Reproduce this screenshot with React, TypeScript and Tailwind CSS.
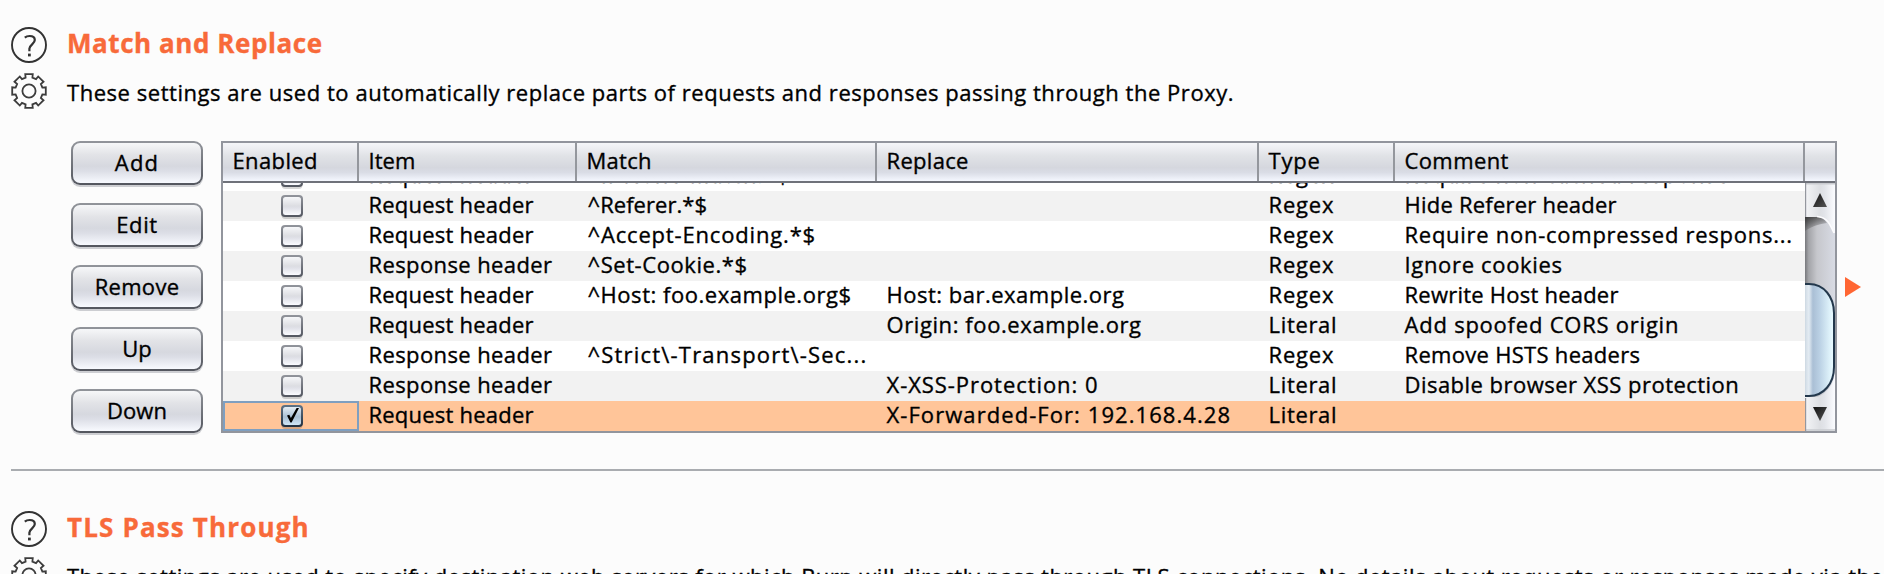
import type { ReactNode } from "react";

type Txt = { t: string; ls: string };
const x = (t: string, ls: string): Txt => ({ t, ls });
const none = x("", "");

const request = x("Request header", "tracking-[0.22px]");
const response = x("Response header", "tracking-[0.39px]");
const regex = x("Regex", "tracking-[0.8px]");
const literal = x("Literal", "tracking-[0.68px]");

const headers: Txt[] = [
  x("Enabled", "tracking-[0.37px]"),
  x("Item", "tracking-[0.05px]"),
  x("Match", "tracking-[0.28px]"),
  x("Replace", "tracking-[0.3px]"),
  x("Type", "tracking-[0.8px]"),
  x("Comment", "tracking-[0.39px]"),
];

const rows: Txt[][] = [
  [request, x("^If-None-Match.*$", "tracking-[0.7px]"), none, regex, x("Require non-cached response", "tracking-[0.7px]")],
  [request, x("^Referer.*$", "tracking-[0.05px]"), none, regex, x("Hide Referer header", "tracking-[0.23px]")],
  [request, x("^Accept-Encoding.*$", "tracking-[0.83px]"), none, regex, x("Require non-compressed respons...", "tracking-[0.73px]")],
  [response, x("^Set-Cookie.*$", "tracking-[0.57px]"), none, regex, x("Ignore cookies", "tracking-[0.67px]")],
  [request, x("^Host: foo.example.org$", "tracking-[0.53px]"), x("Host: bar.example.org", "tracking-[0.5px]"), regex, x("Rewrite Host header", "tracking-[0.23px]")],
  [request, none, x("Origin: foo.example.org", "tracking-[0.59px]"), literal, x("Add spoofed CORS origin", "tracking-[0.77px]")],
  [response, x("^Strict\\-Transport\\-Sec...", "tracking-[1.2px]"), none, regex, x("Remove HSTS headers", "tracking-[0.3px]")],
  [response, none, x("X-XSS-Protection: 0", "tracking-[0.94px]"), literal, x("Disable browser XSS protection", "tracking-[0.47px]")],
  [request, none, x("X-Forwarded-For: 192.168.4.28", "tracking-[1.07px]"), literal, none],
];

const buttons: Txt[] = [
  x("Add", "tracking-[1.2px]"),
  x("Edit", "tracking-[0.59px]"),
  x("Remove", "tracking-[0.3px]"),
  x("Up", "tracking-normal"),
  x("Down", "tracking-[0.08px]"),
];

const columns = "grid grid-cols-[136px_218px_300px_382px_136px_410px]";

function HelpIcon() {
  return (
    <svg width="36" height="36" viewBox="0 0 36 36" fill="none" stroke="#333" className="block shrink-0">
      <circle cx="18" cy="18" r="17" strokeWidth="1.9" />
      <path d="M13.8 10.6C15.2 9.4 17 9 18.6 9C21.8 9 23.8 10.6 23.8 13C23.8 16.8 18.6 17.8 18.4 21.6V24.3" strokeWidth="2.2" />
      <path d="M17 28H19.8" strokeWidth="2.8" />
    </svg>
  );
}

function gearPath() {
  const teeth = 8;
  const pts: string[] = [];
  for (let i = 0; i < teeth; i++) {
    const a = (i * 2 * Math.PI) / teeth;
    const add = (r: number, d: number) =>
      pts.push(`${(18 + r * Math.sin(a + d)).toFixed(2)} ${(18 - r * Math.cos(a + d)).toFixed(2)}`);
    add(13.8, -0.25);
    add(17.2, -0.22);
    add(17.2, 0.22);
    add(13.8, 0.25);
  }
  return `M${pts.join("L")}Z`;
}

function GearIcon() {
  return (
    <svg width="36" height="36" viewBox="0 0 36 36" fill="none" stroke="#3c3c3c" strokeWidth="1.8" className="block shrink-0">
      <path d={gearPath()} />
      <circle cx="18" cy="18" r="6.6" />
    </svg>
  );
}

function Checkbox({ checked }: { checked?: boolean }) {
  return (
    <svg width="22" height="24" viewBox="0 0 22 24" className="ml-[58px] mt-1 block">
      <defs>
        <linearGradient id="cb-edge" x1="0" y1="0" x2="0" y2="1">
          <stop offset="0" stopColor="#92959c" />
          <stop offset="1" stopColor="#525660" />
        </linearGradient>
        <linearGradient id="cb-fill" x1="0" y1="0" x2="0" y2="1">
          <stop offset="0" stopColor="#f6f7f9" />
          <stop offset="0.5" stopColor="#dcdde2" />
          <stop offset="0.6" stopColor="#dfe0e7" />
          <stop offset="1" stopColor="#fafbff" />
        </linearGradient>
        <linearGradient id="cb-on" x1="0" y1="0" x2="0" y2="1">
          <stop offset="0" stopColor="#e4edf5" />
          <stop offset="0.55" stopColor="#a9bfd3" />
          <stop offset="1" stopColor="#d0e6f6" />
        </linearGradient>
        <linearGradient id="cb-on-edge" x1="0" y1="0" x2="0" y2="1">
          <stop offset="0" stopColor="#5f7387" />
          <stop offset="1" stopColor="#22303f" />
        </linearGradient>
      </defs>
      <rect x="0.5" y="2" width="21" height="22" rx="4" fill="#000" fillOpacity="0.16" />
      <rect x="0" y="0" width="22" height="22" rx="4" fill={checked ? "url(#cb-on-edge)" : "url(#cb-edge)"} />
      <rect x="2" y="2" width="18" height="18" rx="2.5" fill={checked ? "url(#cb-on)" : "url(#cb-fill)"} />
      {checked && <path d="M6 10.5L8.3 9.8L9.9 13L15.6 3H18L10.6 17.4H9.4Z" fill="#000" />}
    </svg>
  );
}

function Scrollbar() {
  return (
    <svg width="30" height="248" viewBox="0 0 30 248" className="block">
      <defs>
        <linearGradient id="sb-btn" x1="0" y1="0" x2="1" y2="0">
          <stop offset="0" stopColor="#f4f5f7" />
          <stop offset="0.5" stopColor="#dddfe3" />
          <stop offset="0.65" stopColor="#e2e4e9" />
          <stop offset="1" stopColor="#fbfcff" />
        </linearGradient>
        <linearGradient id="sb-track" x1="0" y1="0" x2="1" y2="0">
          <stop offset="0" stopColor="#77787c" />
          <stop offset="0.12" stopColor="#a3a4a8" />
          <stop offset="0.4" stopColor="#c6c7cc" />
          <stop offset="1" stopColor="#d8dbe4" />
        </linearGradient>
        <linearGradient id="sb-shade" x1="0" y1="0" x2="0.5" y2="1">
          <stop offset="0" stopColor="#333" stopOpacity="0.9" />
          <stop offset="1" stopColor="#333" stopOpacity="0" />
        </linearGradient>
        <linearGradient id="sb-thumb" x1="0" y1="0" x2="1" y2="0">
          <stop offset="0" stopColor="#9fb0c0" />
          <stop offset="0.15" stopColor="#d5dfe8" />
          <stop offset="0.24" stopColor="#e4ecf3" />
          <stop offset="0.36" stopColor="#aabfd5" />
          <stop offset="0.55" stopColor="#b9cfe3" />
          <stop offset="0.94" stopColor="#e6f9ff" />
        </linearGradient>
        <linearGradient id="sb-arrow" x1="0" y1="0" x2="1" y2="1">
          <stop offset="0" stopColor="#111" />
          <stop offset="1" stopColor="#555" />
        </linearGradient>
      </defs>
      <rect width="30" height="248" fill="url(#sb-btn)" />
      <path d="M0 34H13C22 35 25 42 29 50H30V214H0Z" fill="url(#sb-track)" />
      <path d="M0 34H13C18 35 20 37 22 40C14 41 8 43 0 48Z" fill="url(#sb-shade)" />
      <path d="M12 33.5C22 34 25 41 29 50" fill="none" stroke="#fcfcfe" strokeWidth="1.6" />
      <path d="M0 215H5C20 215 30 202 30 186V248H0Z" fill="url(#sb-btn)" />
      <path d="M-4 101H4C19 101 29 114 29 130V184C29 200 19 213 4 213H-4Z" fill="url(#sb-thumb)" stroke="#23384c" strokeWidth="2" />
      <path d="M0 0.8H30M0 247H30" stroke="#c9cbd0" strokeWidth="1.6" />
      <path d="M0.6 0V34M0.6 215V248" stroke="#94979e" strokeWidth="1.2" />
      <path d="M15 10L22 24H8Z" fill="url(#sb-arrow)" />
      <path d="M8 224H22L15 238Z" fill="url(#sb-arrow)" />
    </svg>
  );
}

function Section({ title, description, children }: { title: Txt; description: Txt; children?: ReactNode }) {
  return (
    <section>
      <div className="flex h-[46px] items-start">
        <HelpIcon />
        <h2 className={`ml-5 h-9 text-[26px] font-bold leading-[33px] text-[#f86a3a] whitespace-nowrap ${title.ls}`}>{title.t}</h2>
      </div>
      <div className="flex h-[68px] items-start">
        <GearIcon />
        <p className={`ml-5 text-[22px] leading-[39px] whitespace-nowrap ${description.ls}`}>{description.t}</p>
      </div>
      {children}
    </section>
  );
}

function PushButton({ label }: { label: Txt }) {
  return (
    <button className="h-11 w-[132px] rounded-[9px] bg-gradient-to-b from-[#92959b] to-[#53565e] p-[2px] shadow-[0_2px_0_#cdced2]">
      <span
        className={`flex h-10 items-start justify-center rounded-[7px] bg-[linear-gradient(#f6f7f9_0%,#e2e3e7_30%,#d6d8df_58%,#dcdee6_70%,#f8faff_100%)] text-[22px] leading-[38px] ${label.ls}`}
      >
        {label.t}
      </span>
    </button>
  );
}

export default function App() {
  return (
    <main className="h-[574px] w-[1884px] overflow-hidden bg-[#fcfcfc] pl-[11px] pt-[27px] font-['Open_Sans',sans-serif] text-[22px] text-black [-webkit-text-stroke:0.35px_currentColor]">
      <Section
        title={x("Match and Replace", "tracking-[0.56px]")}
        description={x("These settings are used to automatically replace parts of requests and responses passing through the Proxy.", "tracking-[0.54px]")}
      >
        <div className="flex h-[328px] items-start pl-[60px]">
          <div className="flex w-[150px] flex-col gap-[18px]">
            {buttons.map((b) => (
              <PushButton key={b.t} label={b} />
            ))}
          </div>
          <div className="h-[292px] w-[1616px] border-2 border-[#92959d] bg-white">
            <div className="flex h-10 border-b-2 border-[#6f727a] bg-[linear-gradient(#f5f6f9_0%,#e0e2e6_35%,#d5d7de_65%,#dadde6_78%,#f5f8ff_100%)]">
              <div className={columns}>
                {headers.map((h) => (
                  <div key={h.t} className={`h-[38px] border-r-2 border-[#94979d] pl-[9.5px] leading-[35px] whitespace-nowrap ${h.ls}`}>
                    {h.t}
                  </div>
                ))}
              </div>
            </div>
            <div className="flex h-[248px]">
              <div className="flex h-[248px] w-[1582px] flex-col justify-end overflow-hidden">
                {rows.map((r, i) => {
                  const selected = i === rows.length - 1;
                  return (
                    <div key={i} className={`${columns} h-[30px] shrink-0 ${selected ? "bg-[#ffc599]" : i % 2 ? "bg-[#f2f2f2]" : "bg-white"}`}>
                      <div className={selected ? "h-[30px] shadow-[inset_0_0_0_2px_#7f9fc0]" : "h-[30px]"}>
                        <div className="flex">
                          <Checkbox checked={selected} />
                        </div>
                      </div>
                      {r.map((c, j) => (
                        <div key={j} className={`${j === 1 ? "pl-[10.5px]" : "pl-[9.5px]"} leading-[27px] whitespace-nowrap ${c.ls}`}>
                          {c.t}
                        </div>
                      ))}
                    </div>
                  );
                })}
              </div>
              <Scrollbar />
            </div>
          </div>
          <svg width="16" height="20" viewBox="0 0 16 20" className="ml-2 mt-[136px] block">
            <path d="M0 0L16 10L0 20Z" fill="#ff6633" />
          </svg>
        </div>
      </Section>
      <div className="mb-10 h-[2px] bg-[#a9acb0]" />
      <Section
        title={x("TLS Pass Through", "tracking-[1.15px]")}
        description={x(
          "These settings are used to specify destination web servers for which Burp will directly pass through TLS connections. No details about requests or responses made via these",
          "tracking-[0.47px]",
        )}
      />
    </main>
  );
}
